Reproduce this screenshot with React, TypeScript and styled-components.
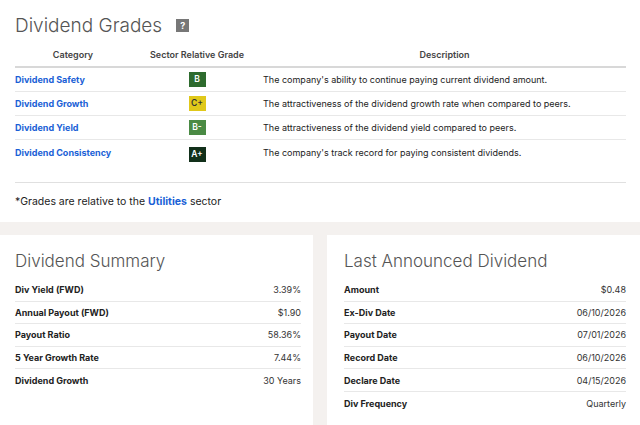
import React from 'react'
import styled, { createGlobalStyle } from 'styled-components'

const Global = createGlobalStyle`
	body { margin: 0; background: #f4f1ef; font-family: Inter, "Liberation Sans", sans-serif; color: #222; }
`

const Top = styled.section`
	background: white;
	padding: 13px 14px 0 15px;
	height: 222px;
	box-sizing: border-box;
`

const Title = styled.h2`
	margin: 0;
	font-size: 19px;
	font-weight: 300;
	color: #555;
	display: flex;
	align-items: center;
	gap: 14px;
	height: 24px;
`

const Help = styled.span`
	width: 13px;
	height: 13px;
	background: #777;
	color: white;
	font-size: 9px;
	font-weight: 700;
	display: grid;
	place-items: center;
`

const Table = styled.table`
	width: 100%;
	border-collapse: collapse;
	margin-top: 5px;
	font-size: 9px;
	th { font-weight: 600; color: #444; height: 24px; padding: 0; border-bottom: 2px solid #d8d8d8; }
	td { height: 24px; padding: 0; border-bottom: 1px solid #e8e8e8; box-sizing: border-box; }
	tr:last-child td { border-bottom: 1px solid #e0e0e0; height: 43px; vertical-align: top; padding-top: 7px; }
`

const Link = styled.span`
	color: #1a5fd6;
	font-weight: 700;
`

const Grade = styled.span<{ $bg: string; $fg: string }>`
	display: inline-grid;
	place-items: center;
	width: 17px;
	height: 15px;
	background: ${p => p.$bg};
	color: ${p => p.$fg};
	font-size: 8.5px;
	font-weight: 600;
`

const Note = styled.p`
	margin: 12px 0 0;
	font-size: 10.5px;
`

const Bottom = styled.div`
	display: grid;
	grid-template-columns: 313px 313px;
	gap: 14px;
	margin-top: 13px;
`

const Card = styled.section`
	background: white;
	padding: 16px 12px 12px 15px;
	height: 190px;
	box-sizing: border-box;
	&:last-child { padding: 16px 14px 12px 17px; }
`

const CardTitle = styled.h3`
	margin: 0 0 6px;
	font-size: 17px;
	font-weight: 300;
	color: #555;
	height: 22px;
`

const Row = styled.div`
	display: flex;
	justify-content: space-between;
	align-items: center;
	height: 22.6px;
	font-size: 9px;
	border-bottom: 1px solid #e8e8e8;
	box-sizing: border-box;
	&:last-child { border-bottom: none; }
	b { font-weight: 700; }
	span { color: #333; }
`

const grades = [
	['Dividend Safety', 'B', '#2e6b2e', '#fff', "The company's ability to continue paying current dividend amount."],
	['Dividend Growth', 'C+', '#e0c81a', '#333', 'The attractiveness of the dividend growth rate when compared to peers.'],
	['Dividend Yield', 'B-', '#4a8a44', '#fff', 'The attractiveness of the dividend yield compared to peers.'],
	['Dividend Consistency', 'A+', '#12301a', '#fff', "The company's track record for paying consistent dividends."],
]

const summary = [
	['Div Yield (FWD)', '3.39%'],
	['Annual Payout (FWD)', '$1.90'],
	['Payout Ratio', '58.36%'],
	['5 Year Growth Rate', '7.44%'],
	['Dividend Growth', '30 Years'],
]

const last = [
	['Amount', '$0.48'],
	['Ex-Div Date', '06/10/2026'],
	['Payout Date', '07/01/2026'],
	['Record Date', '06/10/2026'],
	['Declare Date', '04/15/2026'],
	['Div Frequency', 'Quarterly'],
]

export default function App() {
	return (
		<>
			<Global />
			<Top>
				<Title>Dividend Grades <Help>?</Help></Title>
				<Table>
					<thead>
						<tr>
							<th style={{ width: 116 }}>Category</th>
							<th style={{ width: 132 }}>Sector Relative Grade</th>
							<th>Description</th>
						</tr>
					</thead>
					<tbody>
						{grades.map(([name, g, bg, fg, desc]) => (
							<tr key={name}>
								<td><Link>{name}</Link></td>
								<td style={{ textAlign: 'center' }}><Grade $bg={bg} $fg={fg}>{g}</Grade></td>
								<td>{desc}</td>
							</tr>
						))}
					</tbody>
				</Table>
				<Note>*Grades are relative to the <Link>Utilities</Link> sector</Note>
			</Top>
			<Bottom>
				<Card>
					<CardTitle>Dividend Summary</CardTitle>
					{summary.map(([k, v]) => <Row key={k}><b>{k}</b><span>{v}</span></Row>)}
				</Card>
				<Card>
					<CardTitle>Last Announced Dividend</CardTitle>
					{last.map(([k, v]) => <Row key={k}><b>{k}</b><span>{v}</span></Row>)}
				</Card>
			</Bottom>
		</>
	)
}
